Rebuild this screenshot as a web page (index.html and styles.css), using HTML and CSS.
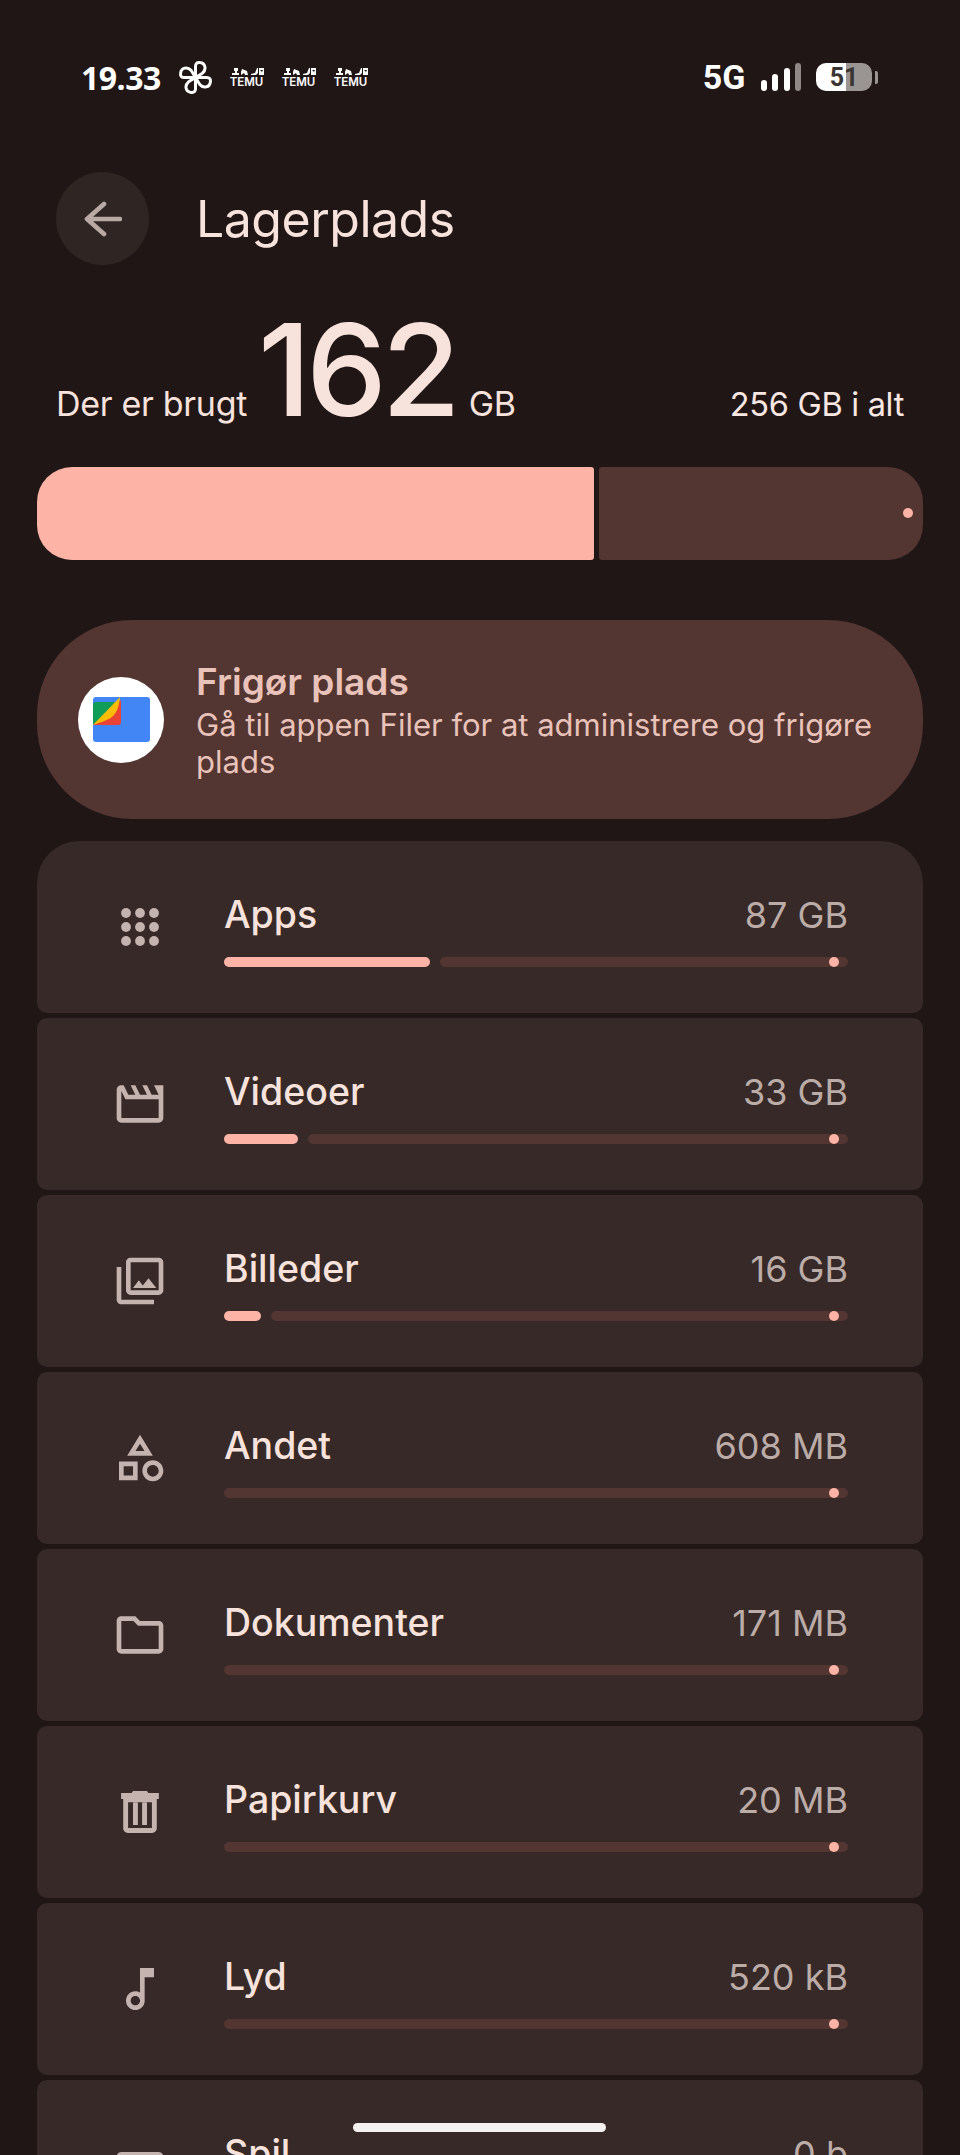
FILE: index.html
```html
<!DOCTYPE html>
<html lang="da">
<head>
    <meta charset="UTF-8">
    <meta name="viewport" content="width=device-width, initial-scale=1.0">
    <title>Lagerplads</title>
    <link rel="stylesheet" href="styles.css">
</head>
<body>
    <div class="screen">
        <div class="status-bar">
            <div class="status-left">
                <span class="clock">19.33</span>
                <svg class="pinwheel" viewBox="0 0 31 31" fill="none" stroke="#fff" stroke-width="2.800" stroke-linejoin="round">
                    <path d="M15.500 15.500V5Q15.500 1 19.500 1.500C25 2 26 8 22 11.500Z"/>
                    <path transform="rotate(90 15.500 15.500)" d="M15.500 15.500V5Q15.500 1 19.500 1.500C25 2 26 8 22 11.500Z"/>
                    <path transform="rotate(180 15.500 15.500)" d="M15.500 15.500V5Q15.500 1 19.500 1.500C25 2 26 8 22 11.500Z"/>
                    <path transform="rotate(270 15.500 15.500)" d="M15.500 15.500V5Q15.500 1 19.500 1.500C25 2 26 8 22 11.500Z"/>
                </svg>
                <div class="temu">
                    <svg viewBox="0 0 34 8" fill="#fff"><path d="M2 8h7V6H7V4h1V1H4v3h1v2H2zM12 2l5 2 1 4h-3l-1-2-3 2V5zM21 7l4-1 2-5h1v5l-2 2h-5zM29 1h5v7h-5zM30 3l2 2 1-2z"/></svg>
                    <span>TEMU</span>
                </div>
                <div class="temu">
                    <svg viewBox="0 0 34 8" fill="#fff"><path d="M2 8h7V6H7V4h1V1H4v3h1v2H2zM12 2l5 2 1 4h-3l-1-2-3 2V5zM21 7l4-1 2-5h1v5l-2 2h-5zM29 1h5v7h-5zM30 3l2 2 1-2z"/></svg>
                    <span>TEMU</span>
                </div>
                <div class="temu">
                    <svg viewBox="0 0 34 8" fill="#fff"><path d="M2 8h7V6H7V4h1V1H4v3h1v2H2zM12 2l5 2 1 4h-3l-1-2-3 2V5zM21 7l4-1 2-5h1v5l-2 2h-5zM29 1h5v7h-5zM30 3l2 2 1-2z"/></svg>
                    <span>TEMU</span>
                </div>
            </div>
            <div class="status-right">
                <span class="network">5G</span>
                <div class="signal">
                    <i class="s1"></i><i class="s2"></i><i class="s3"></i><i class="s4"></i>
                </div>
                <div class="battery">
                    <div class="battery-body"><span>51</span></div>
                    <div class="battery-tip"></div>
                </div>
            </div>
        </div>

        <div class="header">
            <div class="back">
                <svg viewBox="0 0 38 36" fill="none" stroke="#b9a9a5" stroke-width="4.600" stroke-linecap="round" stroke-linejoin="round">
                    <path d="M36 18H3M20 3 3 18l17 15"/>
                </svg>
            </div>
            <h1>Lagerplads</h1>
        </div>

        <div class="usage">
            <div class="used">
                <span class="used-label">Der er brugt</span>
                <span class="used-num">162</span>
                <span class="used-unit">GB</span>
            </div>
            <span class="total">256 GB i alt</span>
        </div>

        <div class="main-bar">
            <div class="main-fill"></div>
            <div class="main-rest"><i></i></div>
        </div>

        <div class="banner">
            <div class="files-logo">
                <svg viewBox="0 0 57 45">
                    <path d="M3 0h51q3 0 3 3v39q0 3-3 3H3q-3 0-3-3V3q0-3 3-3z" fill="#4285f4"/>
                    <path d="M0 8q0-3 3-3h24L0 28z" fill="#0f9d58"/>
                    <path d="M28 3v22q0 3-3 3H0z" fill="#ea4335"/>
                    <path d="M27 0 0 28C8 25 16 23 20 19 25 14 26 8 27 0z" fill="#fbbc04"/>
                </svg>
            </div>
            <div class="banner-text">
                <div class="banner-title">Frigør plads</div>
                <div class="banner-desc">Gå til appen Filer for at administrere og frigøre plads</div>
            </div>
        </div>

        <div class="list">
            <div class="row">
                <div class="row-icon">
                    <svg viewBox="0 0 24 24" fill="#c4b3af"><circle cx="6" cy="6" r="2.100"/><circle cx="12" cy="6" r="2.100"/><circle cx="18" cy="6" r="2.100"/><circle cx="6" cy="12" r="2.100"/><circle cx="12" cy="12" r="2.100"/><circle cx="18" cy="12" r="2.100"/><circle cx="6" cy="18" r="2.100"/><circle cx="12" cy="18" r="2.100"/><circle cx="18" cy="18" r="2.100"/></svg>
                </div>
                <div class="row-body">
                    <div class="row-top"><span class="row-name">Apps</span><span class="row-size">87 GB</span></div>
                    <div class="track-line">
                        <div class="fill" style="width: 206px"></div>
                        <div class="track"><i></i></div>
                    </div>
                </div>
            </div>
            <div class="row">
                <div class="row-icon">
                    <svg viewBox="0 0 24 24" fill="#c4b3af"><path d="M4 6.470 5.760 10H20v8H4V6.470M22 4h-4l2 4h-3l-2-4h-2l2 4h-3l-2-4H8l2 4H7L5 4H4c-1.100 0-1.990.9-1.990 2L2 18c0 1.100.9 2 2 2h16c1.100 0 2-.9 2-2V4z"/></svg>
                </div>
                <div class="row-body">
                    <div class="row-top"><span class="row-name">Videoer</span><span class="row-size">33 GB</span></div>
                    <div class="track-line">
                        <div class="fill" style="width: 74px"></div>
                        <div class="track"><i></i></div>
                    </div>
                </div>
            </div>
            <div class="row">
                <div class="row-icon">
                    <svg viewBox="0 0 24 24" fill="#c4b3af"><path d="M20 4v12H8V4h12m0-2H8c-1.100 0-2 .9-2 2v12c0 1.100.9 2 2 2h12c1.100 0 2-.9 2-2V4c0-1.100-.9-2-2-2zm-8.500 9.670 1.690 2.260 2.480-3.100L19 15H9zM2 6v14c0 1.100.9 2 2 2h14v-2H4V6H2z"/></svg>
                </div>
                <div class="row-body">
                    <div class="row-top"><span class="row-name">Billeder</span><span class="row-size">16 GB</span></div>
                    <div class="track-line">
                        <div class="fill" style="width: 37px"></div>
                        <div class="track"><i></i></div>
                    </div>
                </div>
            </div>
            <div class="row">
                <div class="row-icon">
                    <svg viewBox="0 0 24 24" fill="#c4b3af"><path d="M12 2 6.500 11h11L12 2zm0 3.840L13.930 9h-3.870L12 5.840zM17.500 13c-2.490 0-4.500 2.010-4.500 4.500s2.010 4.500 4.500 4.500 4.500-2.010 4.500-4.500-2.010-4.500-4.500-4.500zm0 7c-1.380 0-2.500-1.120-2.500-2.500s1.120-2.500 2.500-2.500 2.500 1.120 2.500 2.500-1.120 2.500-2.500 2.500zM3 21.500h8v-8H3v8zm2-6h4v4H5v-4z"/></svg>
                </div>
                <div class="row-body">
                    <div class="row-top"><span class="row-name">Andet</span><span class="row-size">608 MB</span></div>
                    <div class="track-line"><div class="track"><i></i></div></div>
                </div>
            </div>
            <div class="row">
                <div class="row-icon">
                    <svg viewBox="0 0 24 24" fill="#c4b3af"><path d="M9.170 6l2 2H20v10H4V6h5.170M10 4H4c-1.100 0-1.990.9-1.990 2L2 18c0 1.100.9 2 2 2h16c1.100 0 2-.9 2-2V8c0-1.100-.9-2-2-2h-8l-2-2z"/></svg>
                </div>
                <div class="row-body">
                    <div class="row-top"><span class="row-name">Dokumenter</span><span class="row-size">171 MB</span></div>
                    <div class="track-line"><div class="track"><i></i></div></div>
                </div>
            </div>
            <div class="row">
                <div class="row-icon">
                    <svg viewBox="0 0 24 24" fill="#c4b3af" fill-rule="evenodd"><path d="M9 3h6l.6.9h4.500v2.500H3.900V3.900h4.500zM4.800 6.400h14.400V19c0 1.100-.9 2-2 2H6.800c-1.100 0-2-.9-2-2zm2.100 1.400v11.100h10.200V7.800zM9 7.700h2.100v9.900H9zm3.900 0H15v9.900h-2.100z"/></svg>
                </div>
                <div class="row-body">
                    <div class="row-top"><span class="row-name">Papirkurv</span><span class="row-size">20 MB</span></div>
                    <div class="track-line"><div class="track"><i></i></div></div>
                </div>
            </div>
            <div class="row">
                <div class="row-icon">
                    <svg viewBox="0 0 24 24" fill="#c4b3af"><path d="M12 3l.01 10.550c-.59-.34-1.270-.55-2-.55C7.790 13 6 14.790 6 17s1.790 4 4.010 4S14 19.210 14 17V7h4V3h-6zm-1.990 16c-1.100 0-2-.9-2-2s.9-2 2-2 2 .9 2 2-.9 2-2 2z"/></svg>
                </div>
                <div class="row-body">
                    <div class="row-top"><span class="row-name">Lyd</span><span class="row-size">520 kB</span></div>
                    <div class="track-line"><div class="track"><i></i></div></div>
                </div>
            </div>
            <div class="row">
                <div class="row-icon">
                    <svg viewBox="0 0 24 24" fill="#c4b3af"><path d="M4 6h16c1.100 0 2 .9 2 2v8c0 1.100-.9 2-2 2H4c-1.100 0-2-.9-2-2V8c0-1.100.9-2 2-2z"/></svg>
                </div>
                <div class="row-body">
                    <div class="row-top"><span class="row-name">Spil</span><span class="row-size">0 b</span></div>
                    <div class="track-line"><div class="track"><i></i></div></div>
                </div>
            </div>
        </div>

        <div class="home-indicator"></div>
    </div>
</body>
</html>
```

FILE: styles.css
```css
* {
    box-sizing: border-box;
}
html, body {
    margin: 0;
    padding: 0;
}
body {
    background: #201615;
    font-family: 'Inter', 'Open Sans', sans-serif;
    color: #f8e2dc;
}
.screen {
    position: relative;
    width: 960px;
    height: 2155px;
    overflow: hidden;
    padding: 0 37px;
}

/* status bar */
.status-bar {
    height: 172px;
    padding: 57px 45px 0;
    display: flex;
    justify-content: space-between;
    align-items: flex-start;
    color: #fff;
}
.status-left, .status-right {
    display: flex;
    align-items: center;
    height: 40px;
}
.clock {
    font-family: 'Open Sans', sans-serif;
    font-weight: 700;
    font-size: 32px;
    letter-spacing: -0.5px;
    width: 98px;
    margin-left: -1px;
}
.pinwheel {
    width: 33px;
    height: 33px;
    margin-right: 17px;
}
.temu {
    width: 35px;
    margin-right: 17px;
    display: flex;
    flex-direction: column;
    align-items: center;
}
.temu svg {
    width: 34px;
    height: 8px;
    display: block;
}
.temu span {
    font-size: 11.500px;
    font-weight: 600;
    line-height: 11px;
    margin-top: 2px;
}
.network {
    font-family: 'Roboto', sans-serif;
    font-weight: 700;
    font-size: 34px;
    margin-right: 15px;
}
.signal {
    display: flex;
    align-items: flex-end;
    gap: 5.500px;
    height: 28px;
    margin-right: 15px;
}
.signal i {
    display: block;
    width: 6px;
    background: #fff;
    border-radius: 3px;
}
.s1 { height: 11px; }
.s2 { height: 17px; }
.s3 { height: 23px; }
.s4 { height: 28px; background: #8f8887 !important; }
.battery {
    display: flex;
    align-items: center;
}
.battery-body {
    width: 56px;
    height: 28px;
    border-radius: 10px;
    background: linear-gradient(to right, #fff 0, #fff 54%, #9a9492 54%, #9a9492 100%);
    display: flex;
    align-items: center;
    justify-content: center;
}
.battery-body span {
    font-family: 'Roboto', sans-serif;
    font-size: 25px;
    font-weight: 700;
    color: #3a3534;
}
.battery-tip {
    width: 3px;
    height: 13px;
    margin-left: 3px;
    background: #9a9492;
    border-radius: 0 2px 2px 0;
}

/* header */
.header {
    display: flex;
    align-items: center;
    margin-left: 19px;
    height: 93px;
}
.back {
    width: 93px;
    height: 93px;
    border-radius: 50%;
    background: #2f2523;
    display: flex;
    align-items: center;
    justify-content: center;
    margin-right: 47px;
}
.back svg {
    width: 38px;
    height: 36px;
}
h1 {
    margin: 0;
    font-size: 50px;
    font-weight: 400;
    letter-spacing: -0.5px;
}

/* used space */
.usage {
    margin-top: 58px;
    padding: 0 19px;
    height: 100px;
    display: flex;
    justify-content: space-between;
    align-items: baseline;
}
.used {
    display: flex;
    align-items: baseline;
}
.used-label, .used-unit, .total {
    font-size: 34px;
    color: #f8e2dc;
    letter-spacing: -0.3px;
}
.total {
    font-size: 32.500px;
    color: #f8e7e2;
}
.used-num {
    font-size: 128px;
    line-height: 94px;
    font-weight: 500;
    margin: 0 13px 0 11px;
    letter-spacing: -5px;
}
.main-bar {
    margin-top: 44px;
    height: 93px;
    display: flex;
    gap: 5px;
}
.main-fill {
    width: 557px;
    background: #fdb4a6;
    border-radius: 35px 3px 3px 35px;
}
.main-rest {
    flex: 1;
    position: relative;
    background: #533531;
    border-radius: 3px 35px 35px 3px;
}
.main-rest i {
    position: absolute;
    right: 10px;
    top: 41px;
    width: 10px;
    height: 10px;
    border-radius: 50%;
    background: #fdb4a6;
}

/* free up banner */
.banner {
    margin-top: 60px;
    height: 199px;
    border-radius: 95px;
    background: #533531;
    display: flex;
    align-items: center;
    padding-left: 41px;
}
.files-logo {
    width: 86px;
    height: 86px;
    border-radius: 50%;
    background: #fff;
    display: flex;
    align-items: center;
    justify-content: center;
    margin-right: 32px;
    flex: none;
}
.files-logo svg {
    width: 57px;
    height: 45px;
}
.banner-text {
    width: 700px;
}
.banner-title {
    font-size: 37px;
    font-weight: 600;
    line-height: 46px;
    color: #e9c2b9;
}
.banner-desc {
    font-size: 31px;
    line-height: 37px;
    margin-top: 1px;
    color: #e9c2b9;
}

/* categories */
.list {
    margin-top: 22px;
    display: flex;
    flex-direction: column;
    gap: 5px;
}
.row {
    flex: none;
    height: 172px;
    background: #362927;
    border-radius: 10px;
    display: flex;
    padding: 0 75px;
}
.row:first-child {
    border-radius: 42px 42px 10px 10px;
}
.row-icon {
    width: 56px;
    height: 56px;
    margin-top: 58px;
    margin-right: 56px;
    flex: none;
}
.row-icon svg {
    width: 56px;
    height: 56px;
    display: block;
}
.row-body {
    flex: 1;
    padding-top: 51px;
}
.row-top {
    display: flex;
    justify-content: space-between;
    align-items: baseline;
    height: 48px;
}
.row-name {
    font-size: 37.500px;
    font-weight: 500;
    color: #f8e2dc;
}
.row-size {
    font-size: 36px;
    color: #bcaca8;
}
.track-line {
    margin-top: 17px;
    display: flex;
    gap: 10px;
}
.fill {
    height: 10px;
    border-radius: 5px;
    background: #fdb4a6;
}
.track {
    flex: 1;
    height: 10px;
    border-radius: 5px;
    background: #533531;
    position: relative;
}
.track i {
    position: absolute;
    right: 9px;
    top: 0;
    width: 10px;
    height: 10px;
    border-radius: 50%;
    background: #fdb4a6;
}
.home-indicator {
    position: absolute;
    left: 353px;
    top: 2123px;
    width: 253px;
    height: 9px;
    border-radius: 5px;
    background: #f5f1f0;
}
```
